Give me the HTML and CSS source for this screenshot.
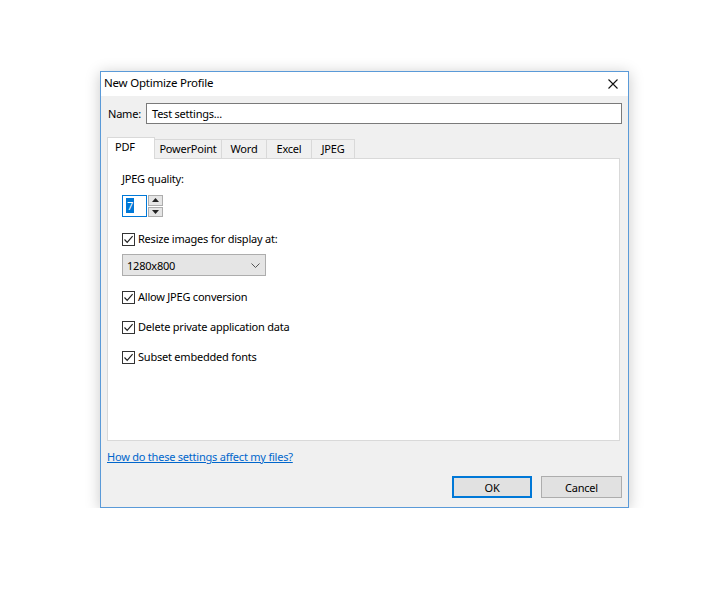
FILE: index.html
```html
<!DOCTYPE html>
<html>
<head>
<meta charset="utf-8">
<link rel="stylesheet" href="styles.css">
</head>
<body>
<div class="page">
  <div class="dialog">
    <div class="titlebar">
      <span class="title">New Optimize Profile</span>
      <span class="close">
        <svg width="10" height="10" viewBox="0 0 10 10"><path d="M0.5 0.5 L9.5 9.5 M9.5 0.5 L0.5 9.5" stroke="#111" stroke-width="1.1" fill="none"/></svg>
      </span>
    </div>
    <div class="body">
      <div class="name-row">
        <label class="name-label">Name:</label>
        <div class="text-input">Test settings...</div>
      </div>
      <div class="tabs">
        <div class="tab active t-pdf">PDF</div>
        <div class="tab t-ppt">PowerPoint</div>
        <div class="tab t-word">Word</div>
        <div class="tab t-excel">Excel</div>
        <div class="tab t-jpeg">JPEG</div>
      </div>
      <div class="panel">
        <div class="label">JPEG quality:</div>
        <div class="spin">
          <div class="spin-input"><span class="sel">7</span></div>
          <div class="spin-btns">
            <div class="spin-btn"><svg width="7" height="4" viewBox="0 0 7 4"><path d="M0 4 L3.5 0 L7 4 Z" fill="#222"/></svg></div>
            <div class="spin-btn"><svg width="7" height="4" viewBox="0 0 7 4"><path d="M0 0 L3.5 4 L7 0 Z" fill="#222"/></svg></div>
          </div>
        </div>
        <div class="check-row first">
          <span class="box"><svg width="11" height="11" viewBox="0 0 11 11"><path d="M1.5 5.5 L4.2 8.3 L9.6 2.2" stroke="#222" stroke-width="1.2" fill="none"/></svg></span>
          <span>Resize images for display at:</span>
        </div>
        <div class="combo">
          <span>1280x800</span>
          <svg width="9" height="5" viewBox="0 0 9 5"><path d="M0.5 0.5 L4.5 4.5 L8.5 0.5" stroke="#555" stroke-width="1" fill="none"/></svg>
        </div>
        <div class="check-row second">
          <span class="box"><svg width="11" height="11" viewBox="0 0 11 11"><path d="M1.5 5.5 L4.2 8.3 L9.6 2.2" stroke="#222" stroke-width="1.2" fill="none"/></svg></span>
          <span>Allow JPEG conversion</span>
        </div>
        <div class="check-row">
          <span class="box"><svg width="11" height="11" viewBox="0 0 11 11"><path d="M1.5 5.5 L4.2 8.3 L9.6 2.2" stroke="#222" stroke-width="1.2" fill="none"/></svg></span>
          <span>Delete private application data</span>
        </div>
        <div class="check-row">
          <span class="box"><svg width="11" height="11" viewBox="0 0 11 11"><path d="M1.5 5.5 L4.2 8.3 L9.6 2.2" stroke="#222" stroke-width="1.2" fill="none"/></svg></span>
          <span>Subset embedded fonts</span>
        </div>
      </div>
      <a class="link" href="#">How do these settings affect my files?</a>
      <div class="buttons">
        <div class="btn default">OK</div>
        <div class="btn">Cancel</div>
      </div>
    </div>
  </div>
</div>
</body>
</html>
```
FILE: styles.css
```css
html, body {
  margin: 0;
  padding: 0;
  background: #ffffff;
}
body {
  font-family: "Noto Sans", "Open Sans", sans-serif;
  font-size: 11px;
  letter-spacing: -0.22px;
  color: #000;
}
.page {
  padding: 71px 0 0 100px;
}
.dialog {
  width: 529px;
  height: 437px;
  box-sizing: border-box;
  border: 1px solid #5a9ad8;
  background: #f0f0f0;
  box-shadow: 0 2px 14px rgba(0, 0, 0, 0.22);
  display: flex;
  flex-direction: column;
}
.titlebar {
  height: 24px;
  background: #ffffff;
  display: flex;
  align-items: center;
  justify-content: space-between;
  padding: 0 10px 3px 3px;
  box-sizing: border-box;
  font-size: 11.5px;
}
.close {
  display: flex;
  width: 10px;
  height: 10px;
  margin-top: 3px;
}
.body {
  flex: 1;
  display: flex;
  flex-direction: column;
  padding: 7px 6px 8px 6px;
}
.name-row {
  display: flex;
  align-items: center;
  height: 21px;
}
.name-label {
  margin-left: 1px;
  width: 38px;
}
.text-input {
  flex: 1;
  height: 21px;
  box-sizing: border-box;
  border: 1px solid #7a7a7a;
  background: #fff;
  padding: 0 5px;
  display: flex;
  align-items: center;
}
.tabs {
  display: flex;
  align-items: flex-end;
  height: 21px;
  margin-top: 13px;
  position: relative;
  z-index: 1;
}
.tab {
  height: 19px;
  box-sizing: border-box;
  border: 1px solid #d9d9d9;
  border-bottom: none;
  border-left: none;
  background: #f0f0f0;
  display: flex;
  align-items: center;
  justify-content: center;
  padding-bottom: 2px;
}
.tab.active {
  height: 22px;
  margin-bottom: -1px;
  background: #fff;
  border-left: 1px solid #d9d9d9;
  justify-content: flex-start;
  padding-left: 7px;
  padding-bottom: 5px;
}
.t-pdf { width: 48px; }
.t-ppt { width: 67px; }
.t-word { width: 45px; }
.t-excel { width: 45px; }
.t-jpeg { width: 43px; }
.panel {
  height: 283px;
  box-sizing: border-box;
  margin-right: 2px;
  background: #ffffff;
  border: 1px solid #d9d9d9;
  padding: 12px 14px 0 14px;
  display: flex;
  flex-direction: column;
  align-items: flex-start;
}
.label {
  line-height: 16px;
}
.spin {
  display: flex;
  margin-top: 8px;
  height: 22px;
}
.spin-input {
  width: 25px;
  height: 22px;
  box-sizing: border-box;
  border: 1px solid #0078d7;
  background: #fff;
  padding: 2px 0 0 3px;
}
.sel {
  display: inline-block;
  background: #0078d7;
  color: #fff;
  line-height: 15px;
  padding: 0 1px;
}
.spin-btns {
  display: flex;
  flex-direction: column;
  margin-left: 1px;
  gap: 1px;
  height: 22px;
}
.spin-btn {
  width: 15px;
  flex: 1;
  box-sizing: border-box;
  border: 1px solid #adadad;
  background: #e5e5e5;
  display: flex;
  align-items: center;
  justify-content: center;
}
.check-row {
  display: flex;
  align-items: center;
  line-height: 16px;
  margin-top: 14px;
}
.check-row.first {
  margin-top: 14px;
}
.check-row.second {
  margin-top: 13px;
}
.box {
  width: 13px;
  height: 13px;
  box-sizing: border-box;
  border: 1px solid #333;
  background: #fff;
  display: flex;
  align-items: center;
  justify-content: center;
  margin-right: 3px;
}
.combo {
  margin-top: 7px;
  width: 144px;
  height: 22px;
  box-sizing: border-box;
  border: 1px solid #adadad;
  background: #e5e5e5;
  display: flex;
  align-items: center;
  justify-content: space-between;
  padding: 0 5px 0 4px;
}
.link {
  margin-top: 8px;
  line-height: 16px;
  color: #0066cc;
  text-decoration: underline;
  align-self: flex-start;
}
.buttons {
  margin-top: 11px;
  display: flex;
  justify-content: flex-end;
  gap: 9px;
}
.btn {
  width: 81px;
  height: 22px;
  box-sizing: border-box;
  border: 1px solid #adadad;
  background: #e1e1e1;
  display: flex;
  align-items: center;
  justify-content: center;
}
.btn.default {
  border: 1px solid #0078d7;
  box-shadow: inset 0 0 0 1px #0078d7;
  width: 80px;
}
```
